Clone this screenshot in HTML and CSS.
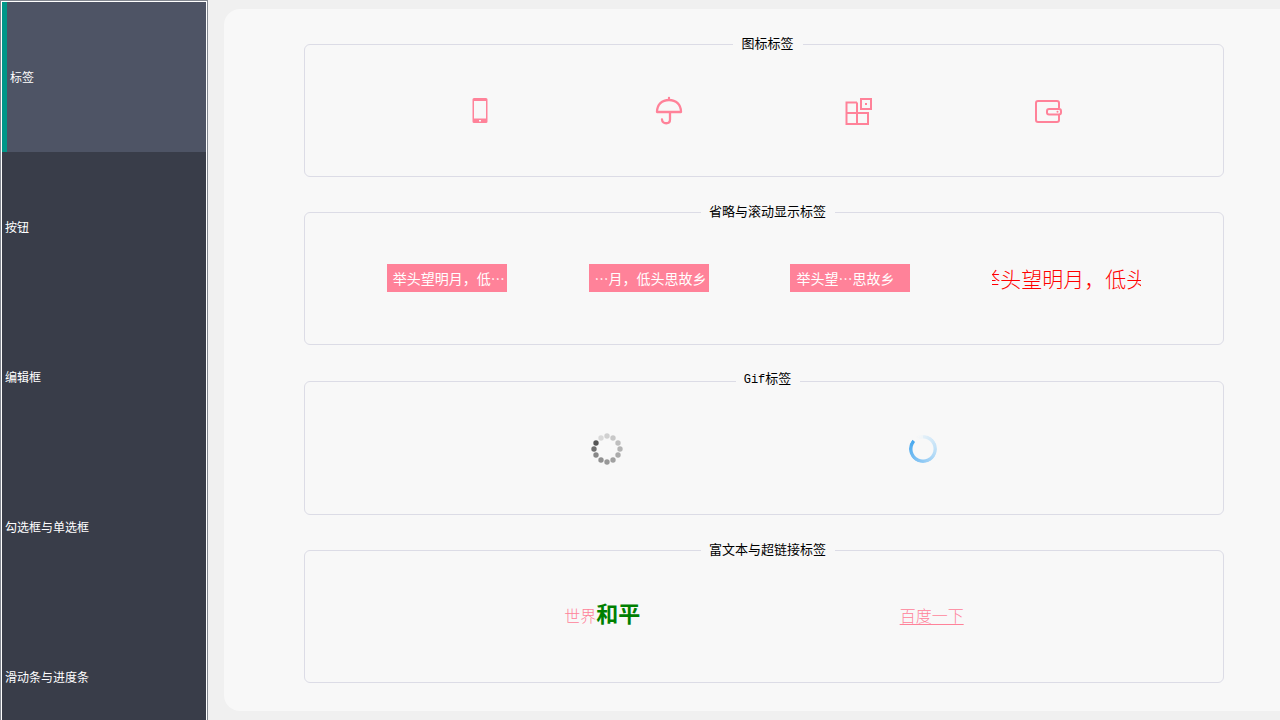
FILE: index.html
```html
<!DOCTYPE html>
<html lang="zh-CN">
<head>
<meta charset="utf-8">
<meta name="viewport" content="width=device-width, initial-scale=1">
<title>标签</title>
<link rel="stylesheet" href="styles.css">
</head>
<body>
<nav class="sidebar">
  <button class="nav-item active" type="button">标签</button>
  <button class="nav-item" type="button">按钮</button>
  <button class="nav-item" type="button">编辑框</button>
  <button class="nav-item" type="button">勾选框与单选框</button>
  <button class="nav-item" type="button">滑动条与进度条</button>
</nav>
<main class="panel">
  <fieldset class="group">
    <legend>图标标签</legend>
    <div class="row">
      <svg class="icon" viewBox="0 0 30 30" aria-hidden="true">
        <path fill="currentColor" fill-rule="evenodd" d="M9 2h12a1.500 1.500 0 0 1 1.500 1.500v22a1.500 1.500 0 0 1-1.500 1.500H9a1.500 1.500 0 0 1-1.500-1.500v-22A1.500 1.500 0 0 1 9 2zM9 5v17.500h12V5zM14 24v1.500h2V24z"/>
      </svg>
      <svg class="icon" viewBox="0 0 30 30" aria-hidden="true">
        <g fill="none" stroke="currentColor" stroke-width="2.300" stroke-linecap="round" stroke-linejoin="round">
          <path d="M15 2v2M3 16C3 8.500 8 4 15 4s12 4.500 12 12zM16 16v7.500c0 5-7.500 5-8 0"/>
        </g>
      </svg>
      <svg class="icon" viewBox="0 0 30 30" aria-hidden="true">
        <g fill="none" stroke="currentColor" stroke-width="2">
          <path d="M13 6.500H2.500V28H24V17H2.500M13 6.500V28M17 3h10v10H17z"/>
        </g>
        <path fill="currentColor" d="M21 7h2v2h-2z"/>
      </svg>
      <svg class="icon" viewBox="0 0 30 30" aria-hidden="true">
        <g fill="none" stroke="currentColor" stroke-width="2">
          <path d="M26 12V7a2 2 0 0 0-2-2H5a2 2 0 0 0-2 2v17a2 2 0 0 0 2 2h19a2 2 0 0 0 2-2v-5"/>
          <rect x="14" y="13" width="14" height="5.500" rx="2"/>
        </g>
        <circle cx="24.500" cy="15.700" r="1" fill="currentColor"/>
      </svg>
    </div>
  </fieldset>
  <fieldset class="group">
    <legend>省略与滚动显示标签</legend>
    <div class="row">
      <span class="chip">举头望明月，低…</span>
      <span class="chip">…月，低头思故乡</span>
      <span class="chip">举头望…思故乡</span>
      <div class="marquee">举头望明月，低头</div>
    </div>
  </fieldset>
  <fieldset class="group">
    <legend><span class="latin">Gif</span>标签</legend>
    <div class="row">
      <svg class="spinner" viewBox="0 0 32 32" aria-hidden="true">
        <circle cx="16" cy="3" r="2.700" fill="#d0d0d0"/>
        <circle cx="22" cy="5" r="2.700" fill="#c8c8c8"/>
        <circle cx="27" cy="10" r="2.700" fill="#bebebe"/>
        <circle cx="29" cy="16" r="2.700" fill="#b4b4b4"/>
        <circle cx="27" cy="22" r="2.700" fill="#ababab"/>
        <circle cx="22" cy="27" r="2.700" fill="#a1a1a1"/>
        <circle cx="16" cy="29" r="2.700" fill="#989898"/>
        <circle cx="10" cy="27" r="2.700" fill="#919191"/>
        <circle cx="5" cy="22" r="2.700" fill="#888888"/>
        <circle cx="3" cy="16" r="2.700" fill="#707070"/>
        <circle cx="5" cy="10" r="2.700" fill="#555555"/>
        <circle cx="10" cy="5" r="2.700" fill="#d9d9d9"/>
      </svg>
      <div class="ring"></div>
    </div>
  </fieldset>
  <fieldset class="group">
    <legend>富文本与超链接标签</legend>
    <div class="row">
      <span class="rich">世界<b>和平</b></span>
      <a class="link" href="#">百度一下</a>
    </div>
  </fieldset>
</main>
</body>
</html>
```
FILE: styles.css
```css
* {
  box-sizing: border-box;
}

body {
  margin: 0;
  height: 100vh;
  display: flex;
  gap: 16px;
  overflow: hidden;
  background: #f0f0f0;
  font: 13px/17px "Noto Sans CJK SC", sans-serif;
  color: #000;
}

.sidebar {
  flex: none;
  width: 208px;
  display: flex;
  flex-direction: column;
  overflow: hidden;
  border: 1px solid #828790;
  border-bottom: 0;
  box-shadow: inset 0 0 0 1px #fff;
  padding: 1px 1px 0;
  background: #393d49;
  background-clip: content-box;
}

.nav-item {
  flex: none;
  height: 150px;
  padding: 0 3px 2px;
  border: 0;
  background: #393d49;
  color: #fff;
  font: inherit;
  font-size: 12px;
  text-align: left;
}

.nav-item.active {
  border-left: 5px solid #009688;
  background: #4e5465;
}

.panel {
  flex: 1;
  min-width: 0;
  margin: 9px 0;
  padding: 25px 56px 28px 80px;
  display: flex;
  flex-direction: column;
  justify-content: space-between;
  border-radius: 16px 0 0 16px;
  background: #f8f8f8;
}

.group {
  min-width: 0;
  margin: 0;
  padding: 0 0 10px 8px;
  border: 1px solid #dcdce6;
  border-radius: 6px;
}

.group legend {
  margin: 0 auto;
  padding: 0 9px 4px 8px;
}

.latin {
  font-family: "Liberation Mono", monospace;
  font-size: 12px;
}

.row {
  height: 111px;
  margin-left: -8px;
  display: flex;
  align-items: center;
  justify-content: space-evenly;
  color: #ff8299;
}

.icon {
  width: 30px;
  height: 30px;
}

.chip {
  width: 120px;
  padding: 0 6px;
  background: #ff8299;
  color: #fff;
  font-size: 14px;
  line-height: 28px;
  white-space: nowrap;
}

.marquee {
  width: 149px;
  overflow: hidden;
  white-space: nowrap;
  text-indent: -13px;
  color: #f00;
  font-size: 21px;
  line-height: 28px;
  font-weight: 300;
}

.spinner {
  width: 32px;
  height: 32px;
}

.ring {
  width: 28px;
  height: 28px;
  border-radius: 50%;
  background: conic-gradient(#e4f0f8, #b9ddf7 30%, #7cc0f3 60%, #48a8ee 86%, transparent 87%, transparent 91%, #f0f5f8);
  mask: radial-gradient(circle, transparent 10px, #000 11px);
}

.rich {
  padding-bottom: 2px;
  font-size: 16px;
  line-height: 28px;
  font-weight: 300;
}

.rich b {
  color: #008000;
  font-family: "Liberation Serif", "Noto Sans CJK SC", serif;
  font-size: 22px;
  font-weight: 700;
}

.link {
  padding-bottom: 2px;
  color: #ff8299;
  font-size: 16px;
  line-height: 24px;
  font-weight: 300;
  text-underline-offset: 2px;
}
```
